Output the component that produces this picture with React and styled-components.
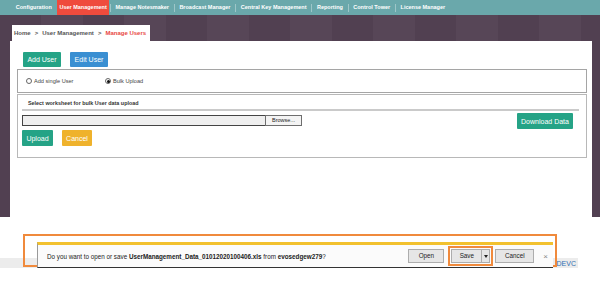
import React from "react";
import styled, { createGlobalStyle } from "styled-components";

const GlobalStyle = createGlobalStyle`
  html, body {
    margin: 0;
    padding: 0;
    background: #fff;
  }
  * {
    box-sizing: border-box;
  }
`;

const Page = styled.div`
  position: relative;
  width: 600px;
  height: 297px;
  overflow: hidden;
  background: #fff;
  font-family: "Liberation Sans", Arial, sans-serif;
`;

const NavBar = styled.nav`
  height: 15px;
  background: #6aa8ab;
  display: flex;
  align-items: center;
  padding-left: 11px;
`;

const NavItem = styled.a`
  height: 15px;
  line-height: 15px;
  padding: 0 ${(props) => (props.active ? "2px" : "4.7px")};
  margin: 0 ${(props) => (props.active ? "1px" : "0")};
  font-size: 5.5px;
  font-weight: bold;
  color: #fff;
  white-space: nowrap;
  background: ${(props) => (props.active ? "#ef4b3d" : "transparent")};
`;

const NavSep = styled.span`
  width: 1px;
  height: 8px;
  background: rgba(255, 255, 255, 0.35);
`;

const Main = styled.main`
  height: 202px;
  padding: 10px 8px 0 10px;
  display: flex;
  flex-direction: column;
  background: repeating-linear-gradient(
    90deg,
    #514051 0 41px,
    #574657 41px 83px
  );
`;

const Crumbs = styled.div`
  align-self: flex-start;
  width: 138px;
  height: 16px;
  margin-left: 2px;
  padding-left: 2px;
  background: #fff;
  font-size: 6px;
  font-weight: bold;
  line-height: 16px;
  color: #555;
  white-space: nowrap;
  span {
    margin: 0 4px;
  }
  em {
    font-style: normal;
    color: #e8493f;
  }
`;

const Panel = styled.section`
  flex: 1;
  background: #fff;
  padding: 11px 5px 0 7px;
`;

const ButtonRow = styled.div`
  display: flex;
  gap: ${(props) => props.gap || 9}px;
  margin-left: ${(props) => props.indent || 0}px;
  margin-top: ${(props) => props.top || 0}px;
`;

const Button = styled.button`
  width: ${(props) => props.w}px;
  height: ${(props) => props.h || 15}px;
  padding: 0;
  border: none;
  border-radius: 1px;
  font-family: inherit;
  font-size: 7px;
  color: #fff;
  background: ${(props) => props.bg};
`;

const RadioBox = styled.div`
  height: 24px;
  margin-top: 2px;
  border: 1px solid #a5a5a5;
  display: flex;
  align-items: center;
  padding-left: 8px;
`;

const RadioOption = styled.label`
  width: ${(props) => props.w}px;
  display: flex;
  align-items: center;
  gap: 2px;
  font-size: 5.6px;
  color: #444;
`;

const RadioDot = styled.span`
  width: 6px;
  height: 6px;
  border-radius: 50%;
  border: 1px solid #666;
  background: #fff;
  display: flex;
  align-items: center;
  justify-content: center;
  &::after {
    content: "";
    display: ${(props) => (props.checked ? "block" : "none")};
    width: 3px;
    height: 3px;
    border-radius: 50%;
    background: #111;
  }
`;

const UploadBox = styled.div`
  height: 64px;
  margin-top: 1px;
  border: 1px solid #b8b8b8;
  padding: 0 13px 0 4px;
`;

const UploadLabel = styled.div`
  margin-left: 6px;
  padding-top: 5px;
  height: 14px;
  font-size: 5.4px;
  font-weight: bold;
  color: #333;
`;

const Rule = styled.div`
  height: 2px;
  margin-right: -6px;
  background: #cacaca;
`;

const FileRow = styled.div`
  display: flex;
  justify-content: space-between;
  align-items: flex-start;
  margin-top: 2px;
`;

const FileInput = styled.div`
  width: 280px;
  height: 11px;
  margin-top: 2px;
  display: flex;
`;

const FileField = styled.div`
  flex: 1;
  background: #efefef;
  border: 1px solid #444;
  border-right: none;
`;

const BrowseButton = styled.div`
  width: 37px;
  border: 1px solid #6e6e6e;
  background: #f4f4f4;
  font-size: 5.5px;
  line-height: 9px;
  text-align: center;
  color: #222;
`;

const Footer = styled.footer`
  margin-top: 41px;
  width: 578px;
  height: 10px;
  background: #ececec;
  display: flex;
  justify-content: flex-end;
  align-items: center;
  padding-right: 2px;
  font-size: 7px;
  color: #2d6fb3;
`;

const Highlight = styled.div`
  position: absolute;
  top: 234px;
  left: 23px;
  width: 534px;
  height: 33px;
  border: 2px solid #f08a3c;
`;

const DownloadBar = styled.div`
  position: absolute;
  top: 242px;
  left: 37px;
  width: 516px;
  height: 26px;
  background: #fbfbfb;
  border-top: 3px solid #f2c12e;
  border-left: 1px solid #9a9a9a;
  border-bottom: 1px solid #333;
  display: flex;
  align-items: center;
  padding: 0 5px 0 9px;
  font-size: 6.3px;
  color: #222;
`;

const Message = styled.div`
  flex: 1;
  white-space: nowrap;
  b {
    font-weight: bold;
  }
`;

const BarButton = styled.div`
  width: ${(props) => props.w}px;
  height: 14px;
  border: 1px solid #adadad;
  background: #e6e6e6;
  font-size: 6.3px;
  line-height: 12px;
  text-align: center;
  color: #222;
  display: flex;
  justify-content: center;
`;

const SaveOutline = styled.div`
  margin: 0 2px 0 4px;
  padding: 1px;
  border: 2px solid #f08a3c;
  display: flex;
`;

const SaveMain = styled.span`
  width: 30px;
  height: 14px;
  border: 1px solid #adadad;
  border-right: none;
  background: #e6e6e6;
  line-height: 12px;
  text-align: center;
`;

const SaveArrow = styled.span`
  width: 9px;
  height: 14px;
  border: 1px solid #adadad;
  background: #e6e6e6;
  display: flex;
  align-items: center;
  justify-content: center;
  &::after {
    content: "";
    border-left: 2px solid transparent;
    border-right: 2px solid transparent;
    border-top: 3px solid #222;
  }
`;

const CloseX = styled.span`
  margin-left: 9px;
  font-size: 8px;
  color: #888;
`;

const navItems = [
  "Configuration",
  "User Management",
  "Manage Notesmaker",
  "Broadcast Manager",
  "Central Key Management",
  "Reporting",
  "Control Tower",
  "License Manager",
];

export default function App() {
  return (
    <Page>
      <GlobalStyle />
      <NavBar>
        {navItems.map((item, i) => (
          <React.Fragment key={item}>
            {i > 1 && <NavSep />}
            <NavItem active={i === 1}>{item}</NavItem>
          </React.Fragment>
        ))}
      </NavBar>
      <Main>
        <Crumbs>
          Home<span>&gt;</span>User Management<span>&gt;</span>
          <em>Manage Users</em>
        </Crumbs>
        <Panel>
          <ButtonRow indent={6}>
            <Button w={38} bg="#25a386">Add User</Button>
            <Button w={38} bg="#3a8fd2">Edit User</Button>
          </ButtonRow>
          <RadioBox>
            <RadioOption w={79}>
              <RadioDot />
              Add single User
            </RadioOption>
            <RadioOption>
              <RadioDot checked />
              Bulk Upload
            </RadioOption>
          </RadioBox>
          <UploadBox>
            <UploadLabel>Select worksheet for bulk User data upload</UploadLabel>
            <Rule />
            <FileRow>
              <FileInput>
                <FileField />
                <BrowseButton>Browse...</BrowseButton>
              </FileInput>
              <Button w={56} h={16} bg="#25a386">Download Data</Button>
            </FileRow>
            <ButtonRow top={1}>
              <Button w={31} h={16} bg="#25a386">Upload</Button>
              <Button w={30} h={16} bg="#efb22c">Cancel</Button>
            </ButtonRow>
          </UploadBox>
        </Panel>
      </Main>
      <Footer>DEVC</Footer>
      <Highlight />
      <DownloadBar>
        <Message>
          Do you want to open or save <b>UserManagement_Data_01012020100406.xls</b> from{" "}
          <b>evosedgew279</b>?
        </Message>
        <BarButton w={36}>Open</BarButton>
        <SaveOutline>
          <SaveMain>Save</SaveMain>
          <SaveArrow />
        </SaveOutline>
        <BarButton w={39}>Cancel</BarButton>
        <CloseX>×</CloseX>
      </DownloadBar>
    </Page>
  );
}
